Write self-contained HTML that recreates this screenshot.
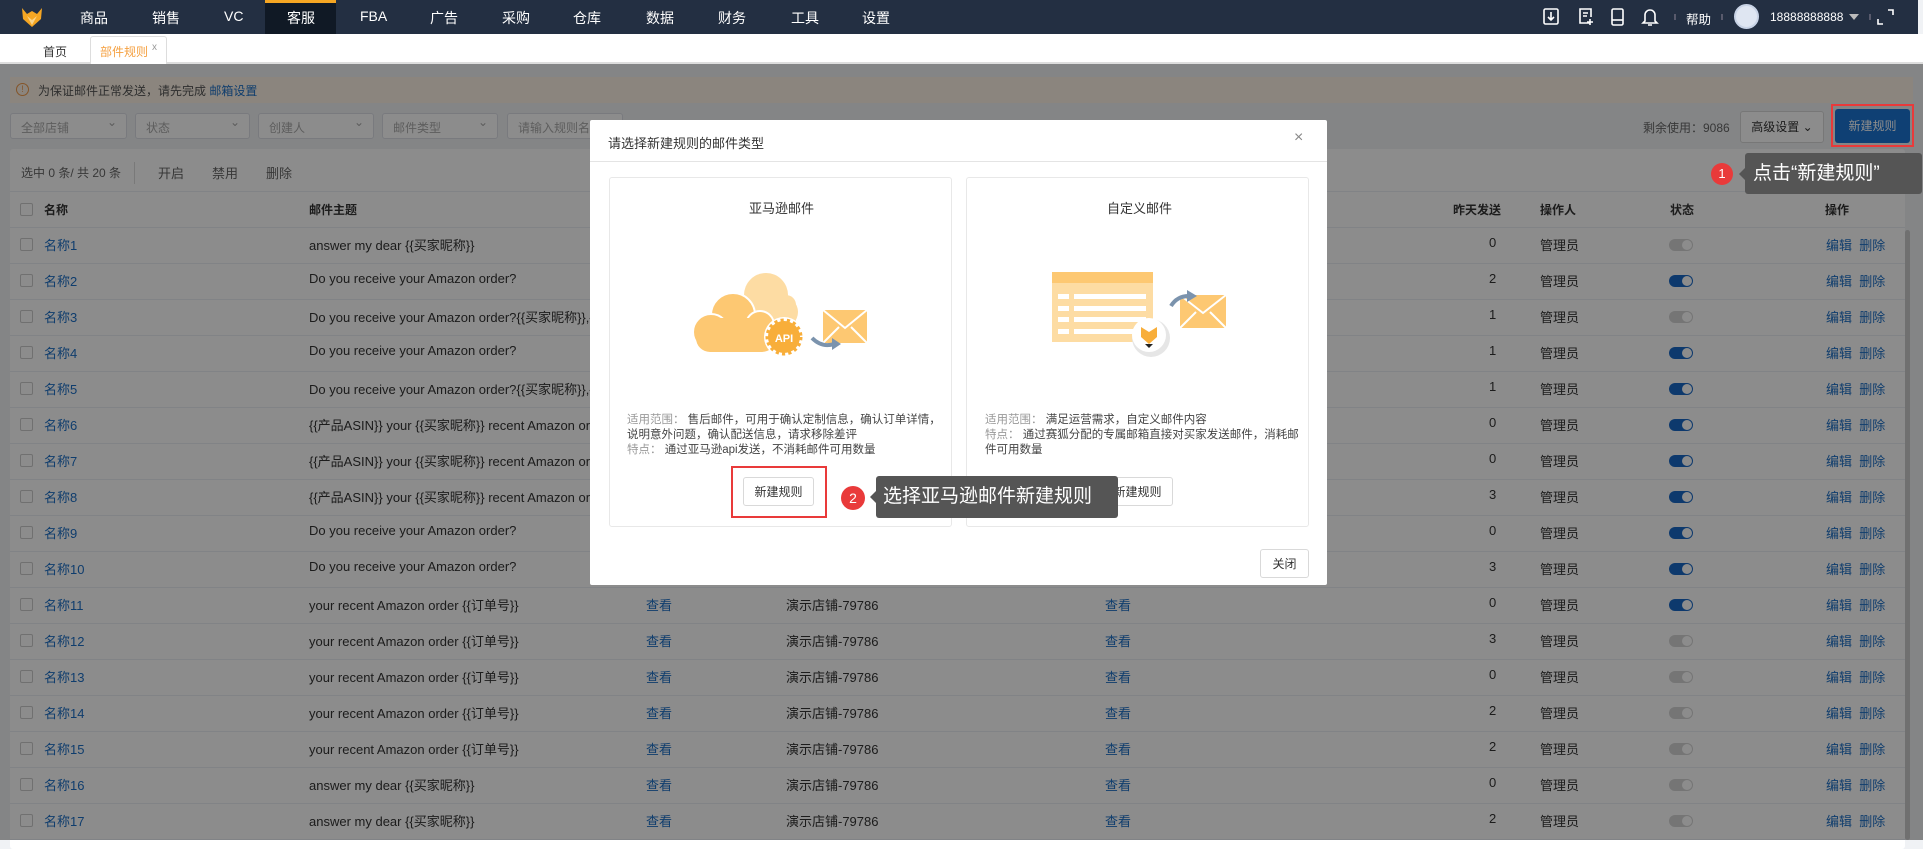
<!DOCTYPE html>
<html><head><meta charset="utf-8"><style>
*{margin:0;padding:0;box-sizing:border-box}
body{width:1923px;height:840px;overflow:hidden;position:relative;background:#f0f2f5;font-family:"Liberation Sans","Noto Sans CJK SC",sans-serif;font-size:13px;color:#333}
.a{position:absolute;white-space:nowrap}
.nav{left:0;top:0;width:1918px;height:34px;background:#232f42}
.blue{color:#1c6fc7}
.sel{height:26px;top:113px;border:1px solid #dcdfe6;background:#fff;border-radius:3px;color:#aaa;font-size:12px;padding:5px 10px}
.sel:after{content:"⌄";position:absolute;right:9px;top:1px;color:#aaa}
.row{left:10px;width:1895px;height:36px;border-bottom:1px solid #ebeef5;background:#fff}
.cb{width:13px;height:13px;border:1px solid #ccc;border-radius:2px;background:#fff}
.sw{width:24px;height:12px;border-radius:6px;background:#d5d5d5}
.sw:after{content:"";position:absolute;right:1px;top:1px;width:10px;height:10px;border-radius:5px;background:#fff}
.sw.on{background:#1869c7}
.card{border:1px solid #e8e8e8;background:#fff;border-radius:3px}
.btn{border:1px solid #d9d9d9;background:#fff;border-radius:3px;font-size:12px;text-align:center;line-height:28px;color:#333}
.t12{font-size:11.5px;color:#444;line-height:15px}
.g{color:#999}
.m{color:#fff;font-size:14px;top:8px}
</style></head><body>
<div class="a nav"></div>
<svg class="a" style="left:20px;top:5px" width="24" height="24" viewBox="0 0 24 24"><path d="M2 3 L7 9 L12 6 L17 9 L22 3 L21 14 L12 22 L3 14Z" fill="#f5a623"/><path d="M7 11 L12 15 L17 11 L12 20Z" fill="#fcd58a"/></svg>
<div class="a" style="left:265px;top:0;width:71px;height:34px;background:#101925"></div>
<div class="a" style="left:265px;top:0;width:71px;height:3px;background:#f5a623"></div>
<div class="a m" style="left:80px">商品</div>
<div class="a m" style="left:152px">销售</div>
<div class="a m" style="left:224px">VC</div>
<div class="a m" style="left:287px">客服</div>
<div class="a m" style="left:360px">FBA</div>
<div class="a m" style="left:430px">广告</div>
<div class="a m" style="left:502px">采购</div>
<div class="a m" style="left:573px">仓库</div>
<div class="a m" style="left:646px">数据</div>
<div class="a m" style="left:718px">财务</div>
<div class="a m" style="left:791px">工具</div>
<div class="a m" style="left:862px">设置</div>
<svg class="a" style="left:1540px;top:6px" width="360" height="22" viewBox="0 0 360 22" fill="none" stroke="#fff" stroke-width="1.6">
<rect x="4" y="3" width="14" height="15" rx="1.5"/><path d="M11 6v8M8 11l3 3 3-3"/>
<path d="M50 17h-10V3h11v8M43 7h5M43 10h4M50 13v6M47 16h6"/>
<rect x="72" y="3" width="11" height="16" rx="1.5"/><path d="M72 14h11"/>
<path d="M105 15V9a5 5 0 0 1 10 0v6l2 2h-14z M108 19h4"/>
<path d="M135 8v6M182 8v6M330 8v6" stroke="#667"/>
<path d="M348 4h5v5M343 18h-5v-5"/>
</svg>
<div class="a" style="left:1686px;top:9px;color:#fff;font-size:12.5px">帮助</div>
<div class="a" style="left:1734px;top:4px;width:25px;height:25px;border-radius:50%;background:#dfe6f2;border:2px solid #c8d3e6"></div>
<div class="a" style="left:1770px;top:10px;color:#fff;font-size:12px">18888888888</div>
<div class="a" style="left:1849px;top:14px;width:0;height:0;border-left:5px solid transparent;border-right:5px solid transparent;border-top:6px solid #bbb"></div>

<div class="a" style="left:0;top:34px;width:1923px;height:30px;background:#fff;border-bottom:2px solid #ddd"></div>
<div class="a" style="left:43px;top:43px;font-size:12px">首页</div>
<div class="a" style="left:90px;top:36px;width:77px;height:28px;border:1px solid #ddd;border-bottom:none;border-radius:3px 3px 0 0;background:#fff"></div>
<div class="a" style="left:100px;top:43px;font-size:12px;color:#f5a040">部件规则</div>
<div class="a" style="left:152px;top:42px;font-size:10px;color:#999">x</div>

<div class="a" style="left:10px;top:77px;width:1903px;height:26px;background:#fdf3e6"></div>
<div class="a" style="left:16px;top:83px;width:13px;height:13px;border:1px solid #f09a4a;border-radius:50%;font-size:9px;color:#f09a4a;text-align:center;line-height:11px">!</div>
<div class="a" style="left:38px;top:82px;font-size:12px;color:#555">为保证邮件正常发送，请先完成 <span class="blue">邮箱设置</span></div>

<div class="a sel" style="left:10px;width:117px">全部店铺</div>
<div class="a sel" style="left:135px;width:115px">状态</div>
<div class="a sel" style="left:258px;width:116px">创建人</div>
<div class="a sel" style="left:382px;width:116px">邮件类型</div>
<div class="a sel" style="left:507px;width:116px">请输入规则名称</div>
<div class="a" style="left:1643px;top:119px;font-size:12px;color:#666">剩余使用：9086</div>
<div class="a btn" style="left:1740px;top:111px;width:84px;height:32px;line-height:30px">高级设置 ⌄</div>
<div class="a" style="left:1835px;top:109px;width:75px;height:34px;background:#1c75d3;border-radius:3px;color:#fff;font-size:12px;text-align:center;line-height:34px">新建规则</div>

<div class="a" style="left:10px;top:149px;width:1895px;height:700px;background:#fff;border-radius:3px"></div>
<div class="a" style="left:21px;top:164px;font-size:12px;color:#666">选中 0 条/ 共 20 条</div>
<div class="a" style="left:134px;top:162px;width:1px;height:22px;background:#ddd"></div>
<div class="a" style="left:158px;top:163px;color:#666">开启</div>
<div class="a" style="left:212px;top:163px;color:#666">禁用</div>
<div class="a" style="left:266px;top:163px;color:#666">删除</div>
<div class="a" style="left:10px;top:191px;width:1895px;height:1px;background:#ebeef5"></div>
<div class="a" style="left:10px;top:192px;width:1895px;height:36px;border-bottom:1px solid #ebeef5"></div>
<div class="a cb" style="left:20px;top:203px"></div>
<div class="a" style="left:44px;top:201px;font-weight:bold;font-size:12px">名称</div>
<div class="a" style="left:309px;top:201px;font-weight:bold;font-size:12px">邮件主题</div>
<div class="a" style="left:1453px;top:201px;font-weight:bold;font-size:12px">昨天发送</div>
<div class="a" style="left:1540px;top:201px;font-weight:bold;font-size:12px">操作人</div>
<div class="a" style="left:1670px;top:201px;font-weight:bold;font-size:12px">状态</div>
<div class="a" style="left:1825px;top:201px;font-weight:bold;font-size:12px">操作</div>

<div id="rows"></div>
<script>
var subs=["answer my dear {{买家昵称}}","Do you receive your Amazon order?","Do you receive your Amazon order?{{买家昵称}},{{","Do you receive your Amazon order?","Do you receive your Amazon order?{{买家昵称}},{{","{{产品ASIN}} your {{买家昵称}} recent Amazon order","{{产品ASIN}} your {{买家昵称}} recent Amazon order","{{产品ASIN}} your {{买家昵称}} recent Amazon order","Do you receive your Amazon order?","Do you receive your Amazon order?","your recent Amazon order {{订单号}}","your recent Amazon order {{订单号}}","your recent Amazon order {{订单号}}","your recent Amazon order {{订单号}}","your recent Amazon order {{订单号}}","answer my dear {{买家昵称}}","answer my dear {{买家昵称}}"];
var cnt=[0,2,1,1,1,0,0,3,0,3,0,3,0,2,2,0,2];
var on=[0,1,0,1,1,1,1,1,1,1,1,0,0,0,0,0,0];
var h="";
for(var i=0;i<17;i++){var y=228+i*36;var t=y+7;
h+='<div class="a row" style="top:'+y+'px"></div>';
h+='<div class="a cb" style="left:20px;top:'+(y+10)+'px"></div>';
h+='<div class="a blue" style="left:44px;top:'+t+'px">名称'+(i+1)+'</div>';
h+='<div class="a" style="left:309px;top:'+t+'px">'+subs[i]+'</div>';
h+='<div class="a blue" style="left:646px;top:'+t+'px">查看</div>';
h+='<div class="a" style="left:786px;top:'+t+'px">演示店铺-79786</div>';
h+='<div class="a blue" style="left:1105px;top:'+t+'px">查看</div>';
h+='<div class="a" style="left:1489px;top:'+t+'px">'+cnt[i]+'</div>';
h+='<div class="a" style="left:1540px;top:'+t+'px">管理员</div>';
h+='<div class="a sw'+(on[i]?' on':'')+'" style="left:1669px;top:'+(y+11)+'px"></div>';
h+='<div class="a blue" style="left:1826px;top:'+t+'px">编辑&nbsp;&nbsp;删除</div>';}
document.getElementById("rows").innerHTML=h;
</script>
<div class="a" style="left:1905px;top:230px;width:5px;height:610px;background:#ccc;border-radius:3px"></div>

<div class="a" style="left:0;top:64px;width:1923px;height:776px;background:rgba(0,0,0,.45)"></div>

<div class="a" style="left:590px;top:120px;width:737px;height:465px;background:#fff;border-radius:2px"></div>
<div class="a" style="left:608px;top:133px;font-size:13px">请选择新建规则的邮件类型</div>
<div class="a" style="left:1294px;top:129px;font-size:16px;color:#888">×</div>
<div class="a" style="left:590px;top:161px;width:737px;height:1px;background:#e4e4e4"></div>
<div class="a card" style="left:609px;top:177px;width:343px;height:350px"></div>
<div class="a card" style="left:966px;top:177px;width:343px;height:350px"></div>
<div class="a" style="left:749px;top:198px;font-size:13px;color:#333">亚马逊邮件</div>
<div class="a" style="left:1107px;top:198px;font-size:13px;color:#333">自定义邮件</div>
<div class="a t12" style="left:627px;top:413px"><span class="g">适用范围：</span> 售后邮件，可用于确认定制信息，确认订单详情，<br>说明意外问题，确认配送信息，请求移除差评<br><span class="g">特点：</span> 通过亚马逊api发送，不消耗邮件可用数量</div>
<div class="a t12" style="left:985px;top:413px"><span class="g">适用范围：</span> 满足运营需求，自定义邮件内容<br><span class="g">特点：</span> 通过赛狐分配的专属邮箱直接对买家发送邮件，消耗邮<br>件可用数量</div>
<div class="a btn" style="left:743px;top:477px;width:71px;height:29px">新建规则</div>
<div class="a btn" style="left:1102px;top:477px;width:71px;height:29px">新建规则</div>
<div class="a btn" style="left:1260px;top:549px;width:49px;height:29px">关闭</div>

<svg class="a" style="left:0;top:0" width="1923" height="840">
<g fill="#fddca3"><circle cx="766" cy="295" r="22"/><circle cx="782" cy="312" r="16"/><rect x="738" y="295" width="58" height="35" rx="10"/></g>
<g fill="#fdc872" stroke="#fff" stroke-width="2"><circle cx="733" cy="315" r="22"/><circle cx="711" cy="332" r="18"/><circle cx="760" cy="325" r="14"/></g>
<rect x="696" y="318" width="80" height="34" rx="14" fill="#fdc872"/>
<circle cx="784" cy="337" r="20" fill="#fff"/>
<circle cx="784" cy="337" r="16" fill="#f8ae3a" stroke="#f8ae3a" stroke-width="5" stroke-dasharray="3 3"/>
<text x="784" y="342" font-size="11" font-weight="bold" fill="#fff" text-anchor="middle" font-family="Liberation Sans">API</text>
<rect x="823" y="310" width="44" height="33" fill="#fdc872"/><path d="M823 310l22 18 22-18M823 343l16-16M867 343l-16-16" stroke="#fff" stroke-width="2" fill="none"/>
<path d="M812 338q10 10 22 6" stroke="#7b93ad" stroke-width="4" fill="none"/><path d="M832 338l9 6-9 6z" fill="#7b93ad"/>
<rect x="1052" y="272" width="101" height="70" fill="#fddca3"/><rect x="1052" y="272" width="101" height="11" fill="#fdc872"/>
<g fill="#fff"><rect x="1058" y="294" width="11" height="5"/><rect x="1074" y="294" width="72" height="5"/><rect x="1058" y="306" width="11" height="5"/><rect x="1074" y="306" width="72" height="5"/><rect x="1058" y="317" width="11" height="5"/><rect x="1074" y="317" width="72" height="5"/><rect x="1058" y="329" width="11" height="5"/><rect x="1074" y="329" width="72" height="5"/></g>
<circle cx="1151" cy="338" r="19" fill="#e6e6e6"/><circle cx="1149" cy="335" r="17" fill="#fff"/>
<path d="M1141 327l8 5 8-5v10l-8 7-8-7z" fill="#f8ae3a"/><path d="M1145 344h8l-4 4z" fill="#222"/>
<rect x="1180" y="295" width="46" height="33" fill="#fdc872"/><path d="M1180 295l23 18 23-18M1180 328l16-16M1226 328l-16-16" stroke="#fff" stroke-width="2" fill="none"/>
<path d="M1171 306q6-10 18-10" stroke="#7b93ad" stroke-width="4" fill="none"/><path d="M1187 290l10 6-10 6z" fill="#7b93ad"/>
</svg>

<div class="a" style="left:1831px;top:104px;width:83px;height:43px;border:2px solid #e93a3a"></div>
<div class="a" style="left:1711px;top:163px;width:22px;height:22px;border-radius:50%;background:#e93a3a;color:#fff;text-align:center;line-height:22px;font-size:13px">1</div>
<div class="a" style="left:1745px;top:153px;width:177px;height:41px;background:#555;border-radius:3px;color:#fff;font-size:19px;line-height:41px;padding-left:8px">点击“新建规则”</div>
<div class="a" style="left:1739px;top:168px;width:0;height:0;border-top:6px solid transparent;border-bottom:6px solid transparent;border-right:6px solid #555"></div>
<div class="a" style="left:731px;top:466px;width:96px;height:52px;border:2px solid #e93a3a"></div>
<div class="a" style="left:841px;top:486px;width:24px;height:24px;border-radius:50%;background:#e93a3a;color:#fff;text-align:center;line-height:24px;font-size:14px">2</div>
<div class="a" style="left:876px;top:476px;width:242px;height:42px;background:#555;border-radius:3px;color:#fff;font-size:19px;line-height:42px;padding-left:7px">选择亚马逊邮件新建规则</div>
<div class="a" style="left:870px;top:491px;width:0;height:0;border-top:6px solid transparent;border-bottom:6px solid transparent;border-right:6px solid #555"></div>
</body></html>
